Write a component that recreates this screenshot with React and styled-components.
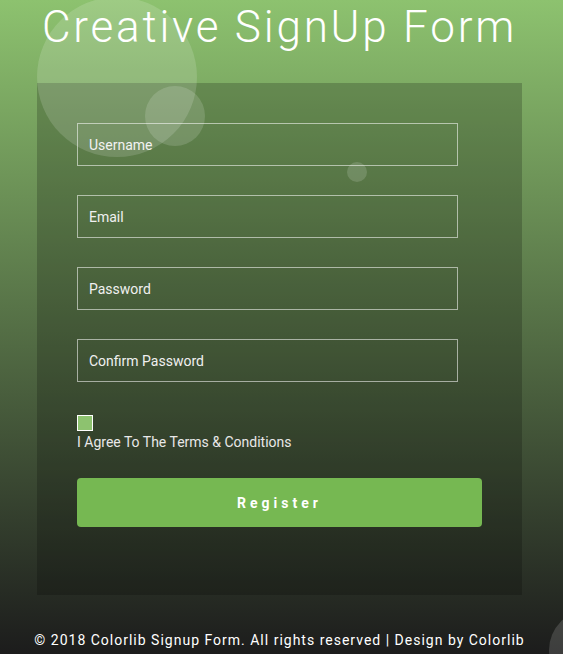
import React from 'react';
import styled, { createGlobalStyle } from 'styled-components';

const GlobalStyle = createGlobalStyle`
  html, body {
    margin: 0;
    padding: 0;
  }
  body {
    font-family: Roboto, "Liberation Sans", sans-serif;
    background: #1c1c1c;
  }
`;

const Page = styled.div`
  position: relative;
  min-height: 654px;
  box-sizing: border-box;
  padding-right: 4px;
  overflow: hidden;
  background: linear-gradient(to bottom, #8dc26f 0%, #1c1c1c 100%);
  display: flex;
  flex-direction: column;
  align-items: center;
`;

const Title = styled.h1`
  margin: 0;
  padding-top: 2px;
  height: 81px;
  font-weight: 300;
  font-size: 44px;
  line-height: 50px;
  letter-spacing: 2.8px;
  color: #fff;
  text-align: center;
`;

const Card = styled.form`
  position: relative;
  z-index: 1;
  width: 485px;
  box-sizing: border-box;
  padding: 40px 40px 68px;
  background: rgba(0, 0, 0, 0.2);
  display: flex;
  flex-direction: column;
`;

const Input = styled.input`
  width: 381px;
  height: 43px;
  box-sizing: border-box;
  margin-bottom: ${p => p.$gap}px;
  padding: 0 11px;
  background: transparent;
  border: 1px solid rgba(255, 255, 255, 0.55);
  font-family: Roboto, "Liberation Sans", sans-serif;
  font-size: 14px;
  color: #fff;
  outline: none;
  &::placeholder {
    color: #f0f0f0;
  }
`;

const Check = styled.span`
  display: block;
  width: 16px;
  height: 16px;
  box-sizing: border-box;
  background: #8dc26f;
  border: 1px solid #fff;
`;

const Agree = styled.label`
  display: block;
  margin-top: 2px;
  font-size: 14px;
  line-height: 18px;
  color: #e8e8e8;
`;

const Button = styled.button`
  margin-top: 27px;
  width: 405px;
  height: 49px;
  border: none;
  border-radius: 4px;
  background: #76b852;
  color: #fff;
  font-family: Roboto, "Liberation Sans", sans-serif;
  font-size: 14px;
  font-weight: 700;
  letter-spacing: 4px;
  cursor: pointer;
`;

const Footer = styled.p`
  margin: 0;
  padding: 37px 0 0;
  font-size: 14px;
  letter-spacing: 1px;
  color: #fff;
  text-align: center;
`;

const Bubble = styled.span`
  position: absolute;
  z-index: 2;
  left: ${p => p.$x}px;
  top: ${p => p.$y}px;
  width: ${p => p.$d}px;
  height: ${p => p.$d}px;
  border-radius: 50%;
  background: rgba(255, 255, 255, ${p => p.$a});
  pointer-events: none;
`;

export default function App() {
  return (
    <Page>
      <GlobalStyle />
      <Bubble $x={37} $y={-3} $d={160} $a={0.15} />
      <Bubble $x={145} $y={86} $d={60} $a={0.15} />
      <Bubble $x={347} $y={162} $d={20} $a={0.15} />
      <Bubble $x={549} $y={610} $d={80} $a={0.15} />
      <Title>Creative SignUp Form</Title>
      <Card onSubmit={e => e.preventDefault()}>
        <Input placeholder="Username" $gap={29} />
        <Input placeholder="Email" $gap={29} />
        <Input type="password" placeholder="Password" $gap={29} />
        <Input type="password" placeholder="Confirm Password" $gap={33} />
        <Check />
        <Agree>I Agree To The Terms &amp; Conditions</Agree>
        <Button type="submit">Register</Button>
      </Card>
      <Footer>© 2018 Colorlib Signup Form. All rights reserved | Design by Colorlib</Footer>
    </Page>
  );
}
